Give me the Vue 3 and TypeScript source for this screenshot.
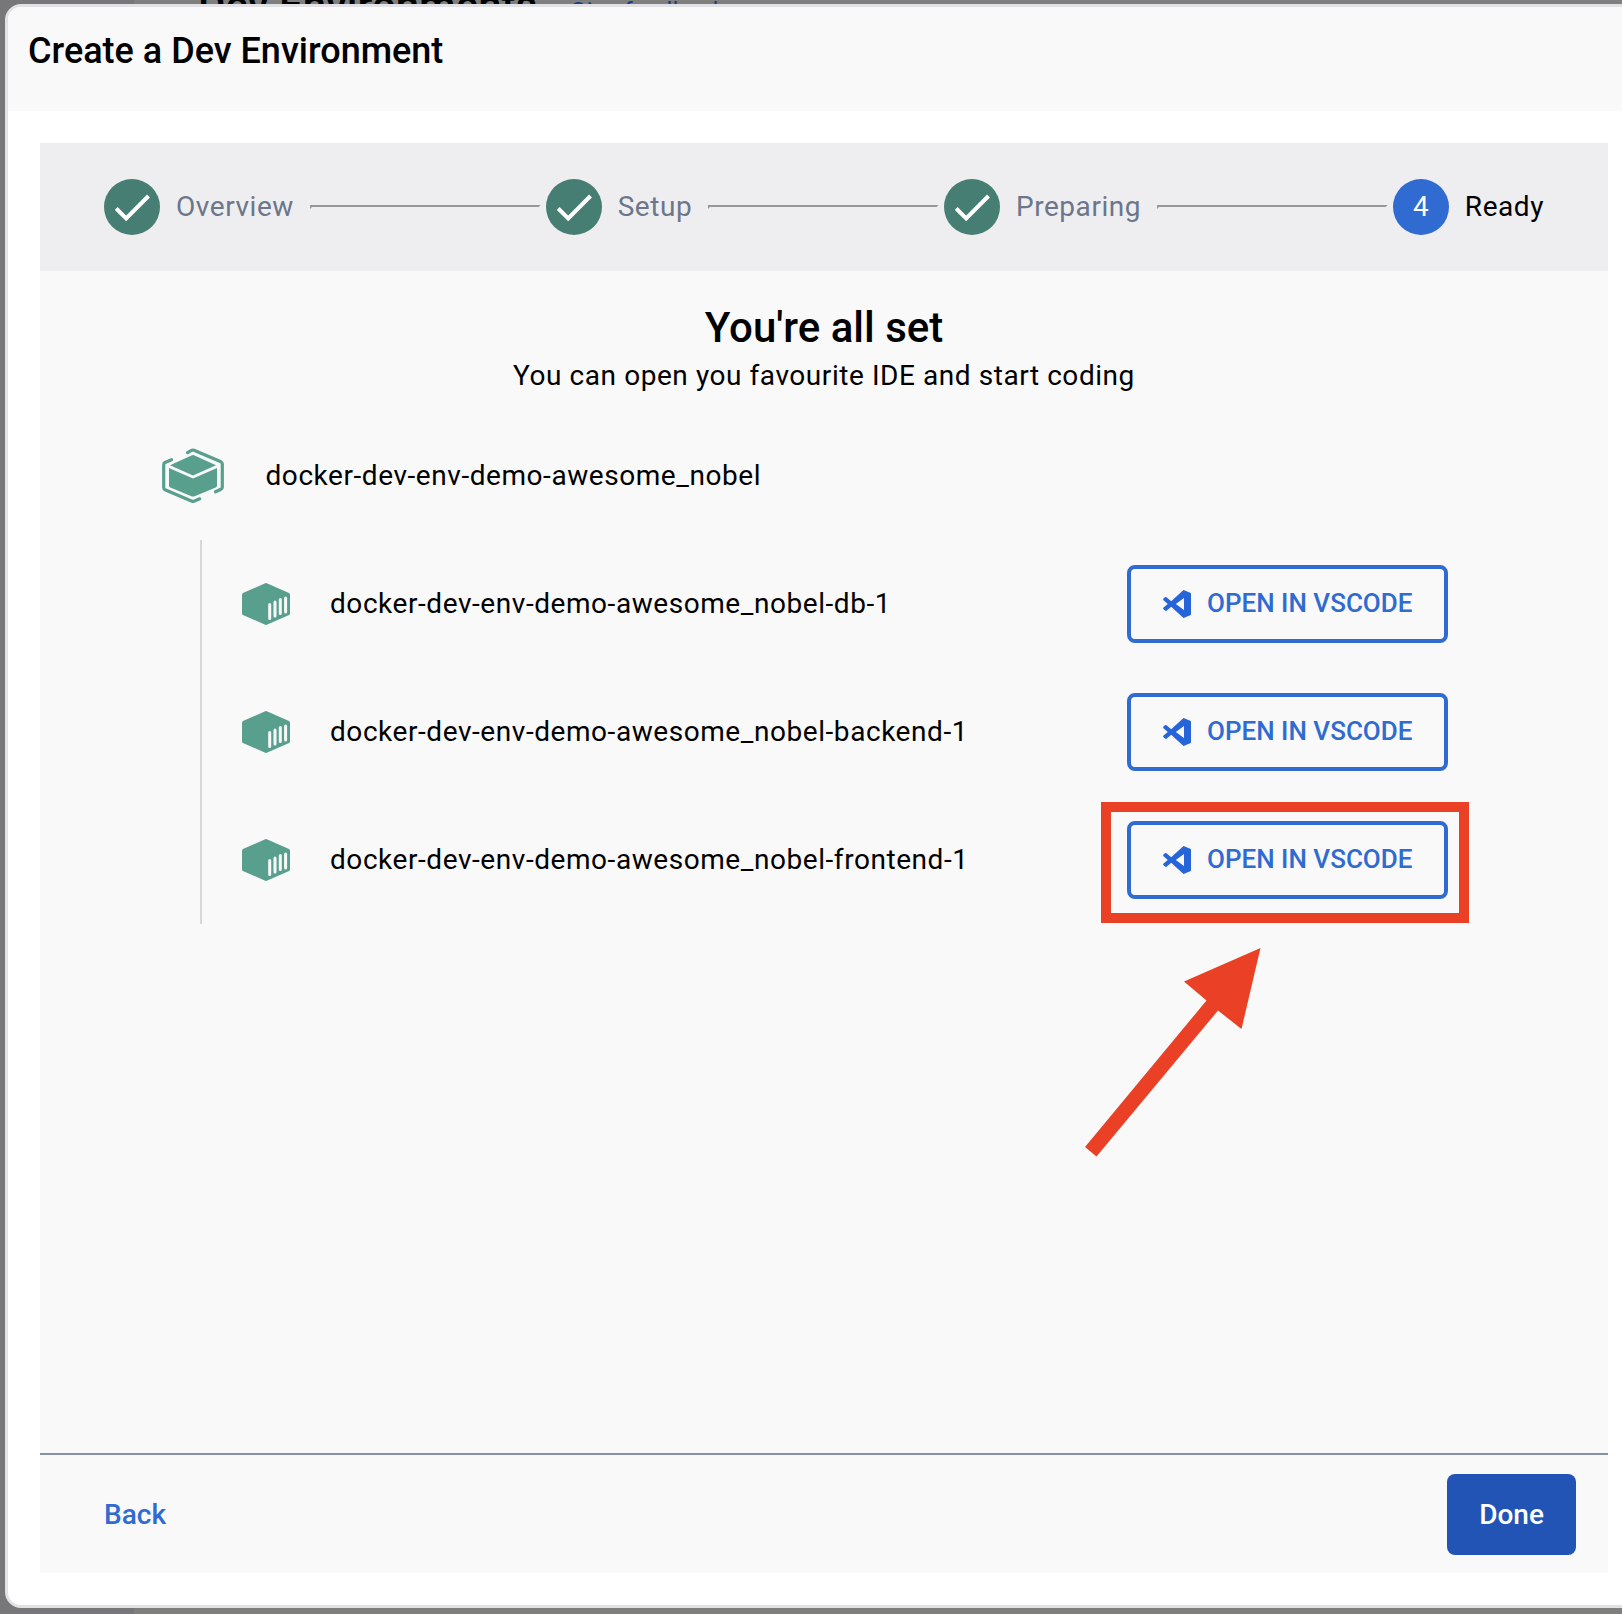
<script setup lang="ts">
const finished = ['Overview', 'Setup', 'Preparing']
const containers = [
  'docker-dev-env-demo-awesome_nobel-db-1',
  'docker-dev-env-demo-awesome_nobel-backend-1',
  'docker-dev-env-demo-awesome_nobel-frontend-1',
]
</script>

<template>
  <div class="page">
    <div class="backdrop">
      <span class="page-title">Dev Environments</span>
      <span class="page-link">Give feedback</span>
    </div>
    <section class="dialog">
      <header class="dialog-head"><h1>Create a Dev Environment</h1></header>
      <div class="panel">
        <div class="stepper">
          <template v-for="label in finished" :key="label">
            <svg class="dot" viewBox="0 0 56 56">
              <circle cx="28" cy="28" r="28" fill="#467e73" />
              <path d="M12.2 29.5 L22.2 39.500 L44.500 17" fill="none" stroke="#fff" stroke-width="4" />
            </svg>
            <span class="label muted">{{ label }}</span>
            <svg class="rail" viewBox="0 0 230 4" preserveAspectRatio="none">
              <path d="M0 0H230L228 2H2L0 4Z" fill="#999697" />
            </svg>
          </template>
          <span class="dot current">4</span>
          <span class="label">Ready</span>
        </div>
        <main class="body">
          <h2>You're all set</h2>
          <p class="sub">You can open you favourite IDE and start coding</p>
          <div class="group">
            <svg class="group-icon" viewBox="0 0 62 56" fill="#589f8e">
              <path d="M8 17.2 L30 7.2 Q31 6.8 32 7.2 L54 17.2 L31 27.5Z" />
              <path d="M7 20 L31 30.5 L55 20V37.5Q55 39 53.7 39.6L32 48.4Q31 48.8 30 48.4L8.3 39.6Q7 39 7 37.5Z" />
              <g fill="none" stroke="#589f8e" stroke-width="3.2" stroke-linecap="round" stroke-linejoin="round">
                <path d="M9.5 11.7 L3 14.5Q1.7 15.2 1.7 16.7V39.5Q1.7 41 3 41.7L30 53.2Q31 53.6 32 53.2L37.7 50.8" />
                <path d="M25.5 4.6 L30 2.2Q31 1.8 32 2.2L59 13.8Q60.3 14.5 60.3 16V39.2Q60.3 40.6 59 41.3L53.5 43.8" />
              </g>
            </svg>
            <span class="name">docker-dev-env-demo-awesome_nobel</span>
          </div>
          <ul class="list">
            <li v-for="(name, i) in containers" :key="name">
              <svg class="box-icon" viewBox="0 0 48 42">
                <path d="M24.8 .2 47 10Q48 10.500 48 11.500V30.500Q48 31.500 47 32L24.800 41.800Q24 42.100 23.200 41.800L1 32Q0 31.500 0 30.500V11.500Q0 10.500 1 10L23.200 .2Q24 -.1 24.800 .2Z" fill="#589f8e" />
                <path d="M27.700 21.500V35.500M33 19V33M38.300 16.500V30.500M43.600 15V29" stroke="#f9f9fa" stroke-width="3" stroke-linecap="round" />
              </svg>
              <span class="name">{{ name }}</span>
              <button class="open">
                <svg viewBox="0 0 28 28">
                  <path fill="#2664d9" fill-rule="evenodd" d="M20.500 0 27.200 2.800Q28 3.200 28 4V24Q28 24.800 27.200 25.200L20.500 28 8.200 16.800 3.500 20.700Q2.700 21.200 2 20.600L.5 19.200Q-.2 18.400 .5 17.600L4.800 14 .5 10.200Q-.2 9.400 .5 8.600L2 7.300Q2.700 6.800 3.500 7.300L8.200 11.200ZM21 8 12.800 14 21 20Z" />
                </svg>
                <span class="open-text">OPEN IN VSCODE</span>
              </button>
              <span v-if="i === containers.length - 1" class="highlight"></span>
            </li>
          </ul>
          <svg class="arrow" viewBox="0 0 176 209">
            <path d="M175.500 0 156.500 81 133 62.500 11.500 208.500 0 199 121.500 52.500 99 33.500Z" fill="#ea4126" />
          </svg>
        </main>
        <footer class="foot">
          <button class="back">Back</button>
          <button class="done">Done</button>
        </footer>
      </div>
    </section>
  </div>
</template>

<style>
body { background: #7f7f7d; overflow: hidden; }
</style>

<style scoped>
* { box-sizing: border-box; margin: 0; }
button { font: inherit; border: 0; background: none; padding: 0; white-space: nowrap; }
.page {
  position: relative; width: 1622px; height: 1614px; padding: 4px 0 6px 5px; overflow: hidden;
  background: linear-gradient(90deg, #777779 134px, #7f7f7d 134px);
  font: 400 28px/44px Roboto, sans-serif; color: #000; letter-spacing: .56px;
}
.backdrop { position: absolute; left: 0; top: 0; width: 100%; height: 4px; overflow: hidden; }
.page-title { position: absolute; left: 198px; top: -16px; font-size: 42px; font-weight: 500; letter-spacing: 0; white-space: nowrap; }
.page-link { position: absolute; left: 570px; top: -11px; font-size: 24px; letter-spacing: .36px; color: #183c85; white-space: nowrap; }
.dialog {
  position: relative; width: 1640px; height: 1604px; background: #fff;
  border: 3px solid #e1e1e6; border-radius: 16px; overflow: hidden;
}
.dialog-head { height: 104px; background: #f9f9fa; padding: 21px 0 0 20px; }
h1 { font-size: 36px; line-height: 46px; font-weight: 500; letter-spacing: 0; }
.panel { margin: 32px 0 0 32px; width: 1568px; height: 1430px; background: #f9f9f9; display: flex; flex-direction: column; }
.stepper { height: 128px; background: #eeeef0; display: flex; align-items: center; padding: 0 64px; }
.dot { width: 56px; height: 56px; flex: none; }
.current { border-radius: 50%; background: #2f6bd0; color: #fff; text-align: center; line-height: 56px; letter-spacing: 0; }
.label { margin-left: 16px; line-height: 56px; white-space: nowrap; }
.muted { color: #6c768a; }
.rail { flex: 1 1 0; min-width: 0; height: 4px; margin: 0 5px 0 16px; }
.body { position: relative; flex: 1; }
h2 { margin-top: 32px; font-size: 42px; line-height: 50px; font-weight: 500; text-align: center; letter-spacing: 0; }
.sub { margin-top: 1px; text-align: center; }
.group { display: flex; align-items: center; height: 128px; margin-top: 14px; padding-left: 122px; }
.group-icon { width: 62px; height: 56px; margin-right: 40.500px; }
.list { list-style: none; margin-left: 160px; padding: 0; border-left: 2px solid #d8d8d8; }
.list li { position: relative; height: 128px; display: flex; align-items: center; padding-left: 40px; }
.box-icon { width: 48px; height: 42px; margin-right: 39px; }
.open {
  margin-left: auto; margin-right: 160px; width: 321px; height: 78px; border: 4px solid #2f6bd0; border-radius: 8px;
  display: flex; align-items: center; padding-left: 32px; gap: 16px;
  color: #2f6bd0; font-size: 26px; font-weight: 500; letter-spacing: 0;
}
.name { padding-left: 1px; white-space: nowrap; }
.open svg { width: 28px; height: 28px; flex: none; }
.open-text { padding-bottom: 2px; }
.highlight { position: absolute; left: 899px; top: 6px; width: 368px; height: 121px; border: 10px solid #ea4126; }
.arrow { position: absolute; left: 1045px; top: 677px; width: 176px; height: 209px; }
.foot {
  height: 120px; border-top: 2px solid #8992a5; display: flex; justify-content: space-between; align-items: flex-start;
  padding: 19px 32px 0 64px; font-weight: 500;
}
.back { color: #2f6bd0; line-height: 81px; letter-spacing: 0; }
.done { width: 129px; height: 81px; border-radius: 8px; background: #2254b5; color: #fff; letter-spacing: 0; }
</style>
